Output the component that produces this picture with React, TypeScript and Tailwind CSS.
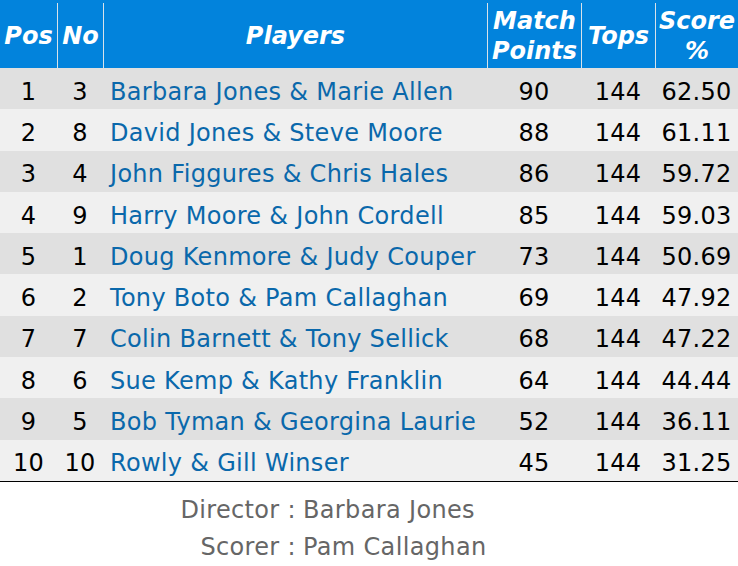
import React from "react";

const rows = [
  [1, 3, "Barbara Jones & Marie Allen", 90, 144, "62.50"],
  [2, 8, "David Jones & Steve Moore", 88, 144, "61.11"],
  [3, 4, "John Figgures & Chris Hales", 86, 144, "59.72"],
  [4, 9, "Harry Moore & John Cordell", 85, 144, "59.03"],
  [5, 1, "Doug Kenmore & Judy Couper", 73, 144, "50.69"],
  [6, 2, "Tony Boto & Pam Callaghan", 69, 144, "47.92"],
  [7, 7, "Colin Barnett & Tony Sellick", 68, 144, "47.22"],
  [8, 6, "Sue Kemp & Kathy Franklin", 64, 144, "44.44"],
  [9, 5, "Bob Tyman & Georgina Laurie", 52, 144, "36.11"],
  [10, 10, "Rowly & Gill Winser", 45, 144, "31.25"],
] as const;

const cols = "grid grid-cols-[57px_46px_384px_94px_74px_83px]";

export default function App() {
  return (
    <div className="w-[738px] h-[566px] bg-white font-['DejaVu_Sans',sans-serif] overflow-hidden">
      <div className={`${cols} h-[68px] bg-[#0283dc] text-white font-bold italic text-[24px] leading-[30px] pt-[3px]`}>
        <div className="flex items-center justify-center">Pos</div>
        <div className="flex items-center justify-center border-l border-[#d8e2ea]">No</div>
        <div className="flex items-center justify-center border-l border-[#d8e2ea]">Players</div>
        <div className="flex items-center justify-center text-center border-l border-[#d8e2ea]">
          Match
          <br />
          Points
        </div>
        <div className="flex items-center justify-center border-l border-[#d8e2ea]">Tops</div>
        <div className="flex items-center justify-center text-center border-l border-[#d8e2ea]">
          Score
          <br />%
        </div>
      </div>
      <div className="border-b border-black">
        {rows.map((r, i) => (
          <div
            key={i}
            className={`${cols} h-[41.3px] items-center text-[24px] leading-[28px] pt-[6px] tracking-[0.3px] text-black ${
              i % 2 === 0 ? "bg-[#e0e0e0]" : "bg-[#f0f0f0]"
            }`}
          >
            <div className="text-center">{r[0]}</div>
            <div className="text-center">{r[1]}</div>
            <div className="pl-[7px] text-[#0a68ab] whitespace-nowrap">{r[2]}</div>
            <div className="text-center">{r[3]}</div>
            <div className="text-center">{r[4]}</div>
            <div className="text-center">{r[5]}</div>
          </div>
        ))}
      </div>
      <div className="mt-[10px] grid grid-cols-[296px_auto] text-[24px] leading-[37px] tracking-[0.35px] text-[#666666]">
        <div className="text-right">Director :</div>
        <div className="pl-[7px]">Barbara Jones</div>
        <div className="text-right">Scorer :</div>
        <div className="pl-[7px]">Pam Callaghan</div>
      </div>
    </div>
  );
}
